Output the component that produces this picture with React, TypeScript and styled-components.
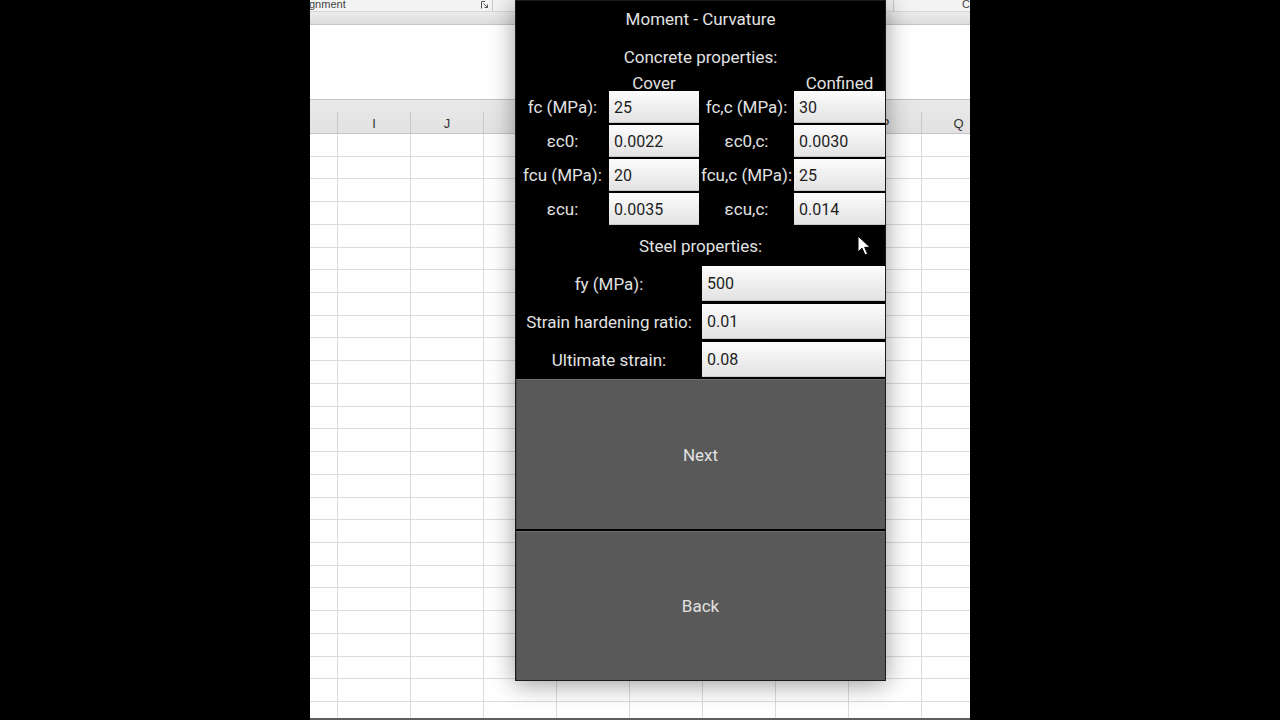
import React from 'react';
import styled, { createGlobalStyle } from 'styled-components';

const GlobalStyle = createGlobalStyle`
  html, body {
    margin: 0;
    padding: 0;
    background: #000;
  }
  * {
    box-sizing: border-box;
  }
`;

const columns = ['H', 'I', 'J', 'K', 'L', 'M', 'N', 'O', 'P', 'Q'];
const colWidth = (i: number) => (i === 0 ? 28 : 73);
const ROW_COUNT = 26;

interface Field {
  label: string;
  value: string;
}

const concreteRows: [Field, Field][] = [
  [{ label: 'fc (MPa):', value: '25' }, { label: 'fc,c (MPa):', value: '30' }],
  [{ label: 'εc0:', value: '0.0022' }, { label: 'εc0,c:', value: '0.0030' }],
  [{ label: 'fcu (MPa):', value: '20' }, { label: 'fcu,c (MPa):', value: '25' }],
  [{ label: 'εcu:', value: '0.0035' }, { label: 'εcu,c:', value: '0.014' }],
];

const steelRows: Field[] = [
  { label: 'fy (MPa):', value: '500' },
  { label: 'Strain hardening ratio:', value: '0.01' },
  { label: 'Ultimate strain:', value: '0.08' },
];

const App: React.FC = () => {
  return (
    <>
      <GlobalStyle />
      <Screen>
        <Sheet>
          <Ribbon>
            <RibbonGroup>
              <RibbonLabel>gnment</RibbonLabel>
              <Launcher>
                <svg width="8" height="8" viewBox="0 0 8 8">
                  <path d="M0.5 0.5 H4 M0.5 0.5 V7.5 M2.5 2.5 L6.5 6.5 M6.5 3.5 V6.5 H3.5" stroke="#555" strokeWidth="1" fill="none" />
                </svg>
              </Launcher>
            </RibbonGroup>
            <RibbonGroup $grow />
            <RibbonGroup>
              <RibbonLabel>C</RibbonLabel>
            </RibbonGroup>
          </Ribbon>
          <RibbonBand />
          <FormulaArea />
          <HeaderRow>
            {columns.map((c, i) => (
              <HeaderCell key={c} style={{ width: colWidth(i) }}>
                {i === 0 ? '' : c}
              </HeaderCell>
            ))}
          </HeaderRow>
          <GridBody>
            {Array.from({ length: ROW_COUNT }).map((_, r) => (
              <GridRow key={r}>
                {columns.map((c, i) => (
                  <GridCell key={c} style={{ width: colWidth(i) }} />
                ))}
              </GridRow>
            ))}
          </GridBody>
          <StatusEdge />

          <AppWindow>
            <Title>Moment - Curvature</Title>
            <SectionTitle $height={38}>Concrete properties:</SectionTitle>
            <ColumnHeads>
              <span />
              <ColumnHead>Cover</ColumnHead>
              <span />
              <ColumnHead>Confined</ColumnHead>
            </ColumnHeads>
            <ConcreteGrid>
              {concreteRows.map(([a, b]) => (
                <React.Fragment key={a.label}>
                  <Label>{a.label}</Label>
                  <Input defaultValue={a.value} />
                  <Label>{b.label}</Label>
                  <Input defaultValue={b.value} />
                </React.Fragment>
              ))}
            </ConcreteGrid>
            <SectionTitle $height={41}>Steel properties:</SectionTitle>
            <SteelGrid>
              {steelRows.map((f) => (
                <React.Fragment key={f.label}>
                  <Label>{f.label}</Label>
                  <Input defaultValue={f.value} />
                </React.Fragment>
              ))}
            </SteelGrid>
            <Buttons>
              <ActionButton>Next</ActionButton>
              <ActionButton>Back</ActionButton>
            </Buttons>
          </AppWindow>

          <Cursor>
            <svg width="14" height="22" viewBox="0 0 14 22">
              <path d="M1 1 L1 17 L5 13.2 L8 20 L10.6 18.8 L7.7 12.3 L13 12.3 Z" fill="#fff" stroke="#000" strokeWidth="1" strokeLinejoin="round" />
            </svg>
          </Cursor>
        </Sheet>
      </Screen>
    </>
  );
};

export default App;

const Screen = styled.div`
  width: 1280px;
  height: 720px;
  display: flex;
  justify-content: center;
  background: #000;
  overflow: hidden;
`;

const Sheet = styled.div`
  position: relative;
  width: 660px;
  height: 720px;
  background: #fff;
  display: flex;
  flex-direction: column;
  overflow: hidden;
  font-family: 'Liberation Sans', Arial, sans-serif;
`;

const Ribbon = styled.div`
  flex: 0 0 12px;
  display: flex;
  background: #f3f3f3;
  border-bottom: 1px solid #d6d6d6;
  overflow: hidden;
`;

const RibbonGroup = styled.div<{ $grow?: boolean }>`
  display: flex;
  align-items: center;
  justify-content: space-between;
  flex: ${({ $grow }) => ($grow ? '1' : '0 0 183px')};
  padding-right: 3px;

  &:first-child {
    border-right: 1px solid #c9c9c9;
  }
  &:last-child {
    justify-content: flex-end;
    flex: 0 0 77px;
    padding-right: 0;
    border-left: 1px solid #c9c9c9;
  }
`;

const RibbonLabel = styled.span`
  font-size: 11px;
  line-height: 11px;
  color: #444;
  margin-left: -1px;
  margin-top: -3px;
  white-space: nowrap;
`;

const Launcher = styled.span`
  display: flex;
  margin-top: -2px;
`;

const RibbonBand = styled.div`
  flex: 0 0 13px;
  background: linear-gradient(#ececec, #dcdcdc);
  border-bottom: 1px solid #c4c4c4;
`;

const FormulaArea = styled.div`
  flex: 0 0 75px;
  background: #fff;
  border-bottom: 1px solid #c2c2c2;
`;

const HeaderRow = styled.div`
  flex: 0 0 34px;
  display: flex;
  align-items: flex-end;
  background: linear-gradient(#e9e9e9, #e2e2e2);
  border-bottom: 1px solid #c4c4c4;
`;

const HeaderCell = styled.div`
  flex: 0 0 auto;
  height: 21px;
  border-right: 1px solid #c9c9c9;
  display: flex;
  align-items: center;
  justify-content: center;
  font-size: 13px;
  color: #333;
  padding-top: 2px;

  &:last-child {
    border-right: none;
  }
`;

const GridBody = styled.div`
  flex: 1;
  display: flex;
  flex-direction: column;
  overflow: hidden;
`;

const GridRow = styled.div`
  flex: 0 0 22.72px;
  display: flex;
  border-bottom: 1px solid #dcdcdc;
`;

const GridCell = styled.div`
  flex: 0 0 auto;
  border-right: 1px solid #dcdcdc;

  &:last-child {
    border-right: none;
  }
`;

const StatusEdge = styled.div`
  flex: 0 0 2px;
  background: #5e5e5e;
`;

const AppWindow = styled.div`
  position: absolute;
  left: 205px;
  top: 0;
  width: 371px;
  height: 681px;
  background: #000;
  border: 1px solid #1c1c1c;
  box-shadow: 0 3px 24px rgba(0, 0, 0, 0.4);
  display: flex;
  flex-direction: column;
  font-family: Roboto, 'Noto Sans', sans-serif;
  color: #e2e2e2;
`;

const Title = styled.div`
  flex: 0 0 37px;
  display: flex;
  align-items: center;
  justify-content: center;
  font-size: 17px;
  padding-bottom: 2px;
`;

const SectionTitle = styled.div<{ $height: number }>`
  flex: 0 0 ${({ $height }) => $height}px;
  display: flex;
  align-items: center;
  justify-content: center;
  font-size: 17px;
`;

const ColumnHeads = styled.div`
  flex: 0 0 15px;
  display: grid;
  grid-template-columns: 93px 90px 95px 91px;
  align-items: start;
  overflow: visible;
`;

const ColumnHead = styled.span`
  text-align: center;
  font-size: 17px;
  line-height: 14px;
`;

const ConcreteGrid = styled.div`
  display: grid;
  grid-template-columns: 93px 90px 95px 91px;
  grid-auto-rows: 32px;
  row-gap: 2px;
`;

const SteelGrid = styled.div`
  display: grid;
  grid-template-columns: 186px 183px;
  grid-auto-rows: 35px;
  row-gap: 3px;
`;

const Label = styled.div`
  display: flex;
  align-items: center;
  justify-content: center;
  font-size: 17px;
  white-space: nowrap;
  min-width: 0;
`;

const Input = styled.input`
  width: 100%;
  height: 100%;
  margin: 0;
  border: none;
  outline: none;
  padding: 0 5px;
  background: linear-gradient(#fcfcfc, #e2e2e2);
  box-shadow: inset 0 -1px 0 #c8c8c8;
  font-family: Roboto, 'Noto Sans', sans-serif;
  font-size: 16px;
  color: #1e1e1e;
`;

const Buttons = styled.div`
  flex: 1;
  display: flex;
  flex-direction: column;
  gap: 2px;
  padding-top: 2px;
`;

const ActionButton = styled.button`
  flex: 1;
  margin: 0;
  border: none;
  background: #595959;
  box-shadow: inset 0 1px 0 #6f6f6f, inset 1px 0 0 #4a4a4a;
  color: #e2e2e2;
  font-family: Roboto, 'Noto Sans', sans-serif;
  font-size: 17px;
  padding-top: 3px;
  cursor: pointer;
`;

const Cursor = styled.div`
  position: absolute;
  left: 547px;
  top: 235px;
  display: flex;
  pointer-events: none;
`;
